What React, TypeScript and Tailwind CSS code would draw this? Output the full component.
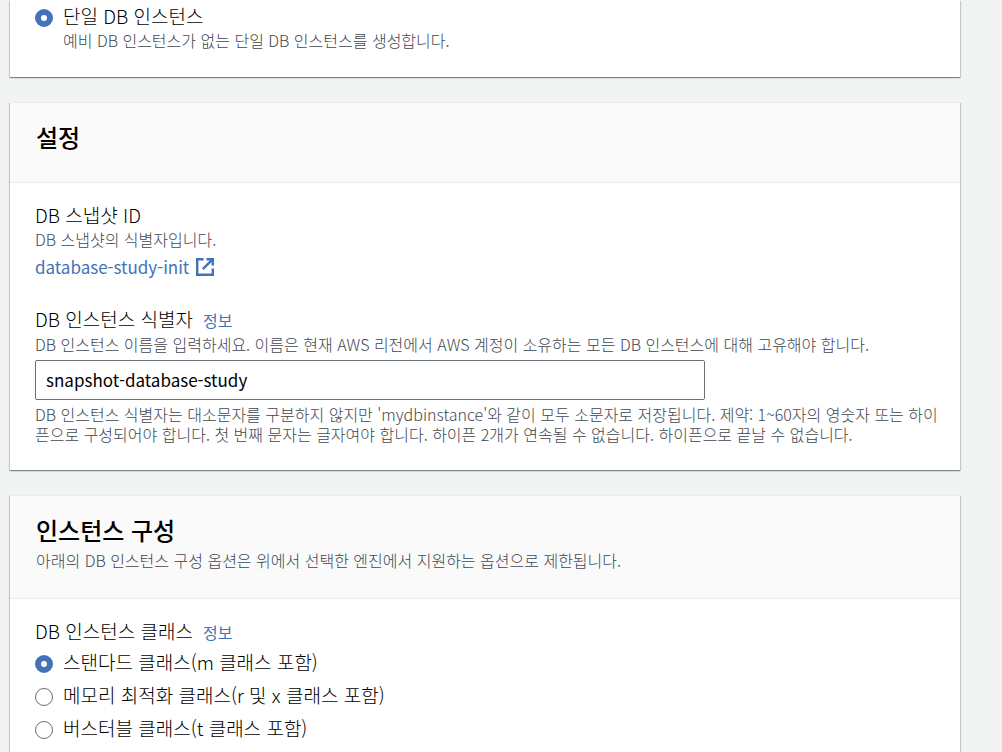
/**
 * Restore Snapshot Page
 * Form panels for restoring a DB instance from a snapshot
 */

import { useState, type ReactNode } from 'react';

const INSTANCE_CLASSES = [
  { id: 'standard', label: '스탠다드 클래스(m 클래스 포함)' },
  { id: 'memory', label: '메모리 최적화 클래스(r 및 x 클래스 포함)' },
  { id: 'burstable', label: '버스터블 클래스(t 클래스 포함)' },
];

function ExternalIcon({ className = 'w-5 h-5' }: { className?: string }) {
  return (
    <svg className={className} viewBox="0 0 20 20" fill="none" stroke="currentColor" strokeWidth={2.4} aria-hidden="true">
      <path d="M8.5 2.2H2.2v15.6h15.6v-6.3" />
      <path d="M11.5 2.2h6.3v6.3M17.3 2.7l-9.5 9.5" />
    </svg>
  );
}

function Panel({ children }: { children: ReactNode }) {
  return (
    <section className="bg-white shadow-[0_1px_1px_0_rgba(0,28,36,0.3),1px_1px_1px_0_rgba(0,28,36,0.15),-1px_1px_1px_0_rgba(0,28,36,0.15)]">
      {children}
    </section>
  );
}

function PanelHeader({ title, description }: { title: string; description?: string }) {
  return (
    <header className="min-h-[81px] border-y border-[#eaeded] bg-[#fafafa] px-[26px] pt-[18px] pb-7">
      <h2 className="text-2xl leading-8 font-medium">{title}</h2>
      {description && <Hint className="mt-1">{description}</Hint>}
    </header>
  );
}

function Hint({ children, className = '' }: { children: ReactNode; className?: string }) {
  return <p className={`text-[16px] leading-5 text-[#414750] ${className}`}>{children}</p>;
}

function InfoLink() {
  return (
    <a href="#info" className="ml-2.5 text-[16px] font-normal text-[#4472b9]">
      정보
    </a>
  );
}

interface RadioProps {
  name: string;
  label: string;
  checked: boolean;
  onChange: () => void;
}

function Radio({ name, label, checked, onChange }: RadioProps) {
  return (
    <label className="flex items-center gap-2.5 text-[19px] leading-7">
      <input
        type="radio"
        name={name}
        checked={checked}
        onChange={onChange}
        className="mt-1 size-[18px] shrink-0 appearance-none rounded-full border border-[#687078] bg-white checked:border-[6px] checked:border-[#4472b9]"
      />
      {label}
    </label>
  );
}

export default function App() {
  const [identifier, setIdentifier] = useState('snapshot-database-study');
  const [instanceClass, setInstanceClass] = useState('standard');
  const [deployment, setDeployment] = useState('single');

  return (
    <main
      lang="ko"
      className="flex min-h-screen flex-col gap-[25px] bg-[#f2f3f3] pr-[42px] pl-2.5 font-['Noto_Sans_CJK_KR',sans-serif] font-light text-black"
    >
      <Panel>
        <div className="px-[25px] pt-0.5 pb-[27px]">
          <Radio
            name="deployment"
            label="단일 DB 인스턴스"
            checked={deployment === 'single'}
            onChange={() => setDeployment('single')}
          />
          <Hint className="ml-7">예비 DB 인스턴스가 없는 단일 DB 인스턴스를 생성합니다.</Hint>
        </div>
      </Panel>

      <Panel>
        <PanelHeader title="설정" />
        <div className="pt-[18px] pr-5 pb-[26px] pl-[25px]">
          <h3 className="text-[19px] leading-7">DB 스냅샷 ID</h3>
          <Hint>DB 스냅샷의 식별자입니다.</Hint>
          <a href="#snapshot" className="mt-1 flex items-center gap-1.5 text-[17px] leading-7 font-normal text-[#4472b9]">
            database-study-init
            <ExternalIcon />
          </a>

          <div className="mt-6 text-[19px] leading-7">
            <label htmlFor="identifier">DB 인스턴스 식별자</label>
            <InfoLink />
          </div>
          <Hint>
            DB 인스턴스 이름을 입력하세요. 이름은 현재 AWS 리전에서 AWS 계정이 소유하는 모든 DB 인스턴스에 대해 고유해야 합니다.
          </Hint>
          <input
            id="identifier"
            type="text"
            value={identifier}
            onChange={(event) => setIdentifier(event.target.value)}
            className="mt-1.5 mb-1 block h-10 w-[74%] rounded-xs border border-[#687078] bg-white px-2.5 pb-0.5 text-[17px] font-normal"
          />
          <Hint className="break-all">
            DB 인스턴스 식별자는 대소문자를 구분하지 않지만 'mydbinstance'와 같이 모두 소문자로 저장됩니다. 제약: 1~60자의 영숫자 또는 하이픈으로 구성되어야 합니다. 첫 번째 문자는 글자여야 합니다. 하이픈 2개가 연속될 수 없습니다. 하이픈으로 끝날 수 없습니다.
          </Hint>
        </div>
      </Panel>

      <Panel>
        <PanelHeader
          title="인스턴스 구성"
          description="아래의 DB 인스턴스 구성 옵션은 위에서 선택한 엔진에서 지원하는 옵션으로 제한됩니다."
        />
        <fieldset className="px-[25px] pt-[18px] pb-[26px]">
          <legend className="float-left w-full text-[19px] leading-7">
            DB 인스턴스 클래스
            <InfoLink />
          </legend>
          <div className="clear-both flex flex-col gap-[5px] pt-0.5">
            {INSTANCE_CLASSES.map((item) => (
              <Radio
                key={item.id}
                name="instance-class"
                label={item.label}
                checked={instanceClass === item.id}
                onChange={() => setInstanceClass(item.id)}
              />
            ))}
          </div>
        </fieldset>
      </Panel>
    </main>
  );
}
